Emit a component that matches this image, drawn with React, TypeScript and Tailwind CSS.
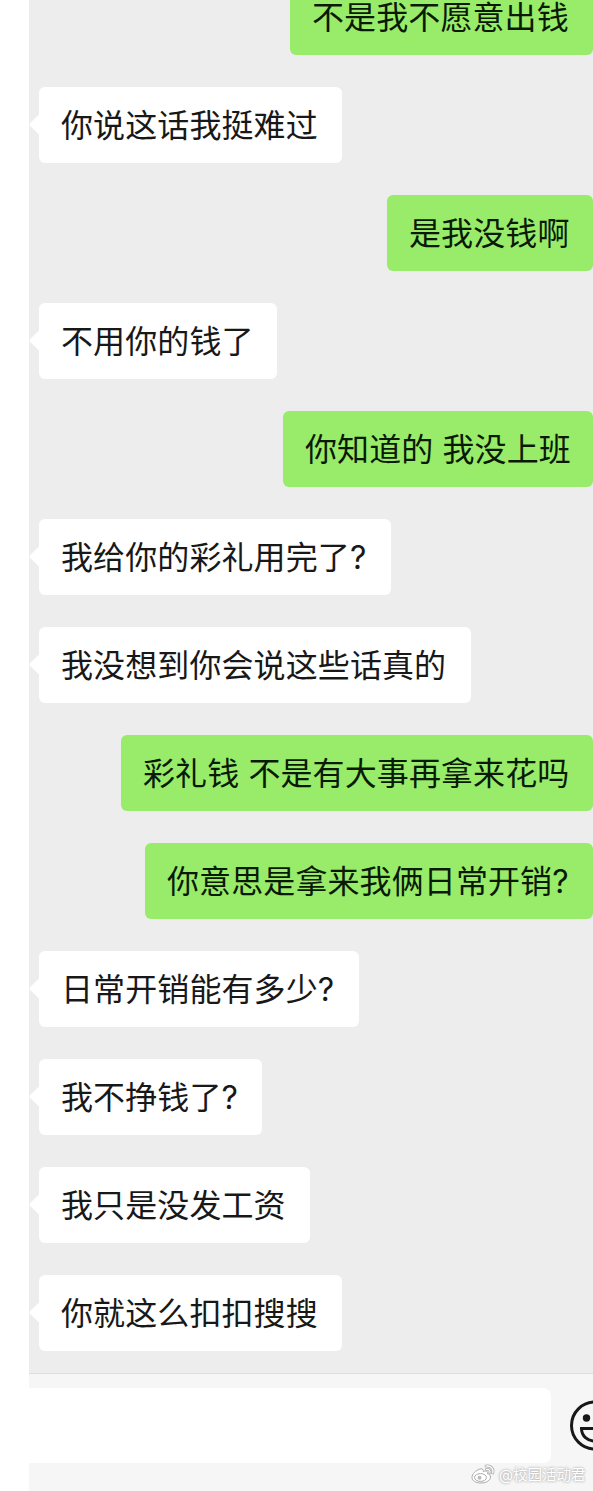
type Message = {
  text: string;
  mine?: boolean;
  width: string;
};

const messages: Message[] = [
  { text: "不是我不愿意出钱", mine: true, width: "w-[303px]" },
  { text: "你说这话我挺难过", width: "w-[303px]" },
  { text: "是我没钱啊", mine: true, width: "w-[206px]" },
  { text: "不用你的钱了", width: "w-[238px]" },
  { text: "你知道的 我没上班", mine: true, width: "w-[310px]" },
  { text: "我给你的彩礼用完了?", width: "w-[352px]" },
  { text: "我没想到你会说这些话真的", width: "w-[432px]" },
  { text: "彩礼钱 不是有大事再拿来花吗", mine: true, width: "w-[472px]" },
  { text: "你意思是拿来我俩日常开销?", mine: true, width: "w-[448px]" },
  { text: "日常开销能有多少?", width: "w-[320px]" },
  { text: "我不挣钱了?", width: "w-[223px]" },
  { text: "我只是没发工资", width: "w-[271px]" },
  { text: "你就这么扣扣搜搜", width: "w-[303px]" },
];

const Bubble = ({ text, mine, width }: Message) => {
  if (mine) {
    return (
      <div className="flex justify-end">
        <div
          className={`flex h-[76px] items-center rounded-md bg-[#98ec6a] pt-[2px] pl-[22px] text-[#0b1a05] ${width}`}
        >
          <span className="whitespace-nowrap">{text}</span>
        </div>
      </div>
    );
  }

  return (
    <div className="flex items-center">
      <svg width="10" height="24" viewBox="0 0 10 24" fill="#fff">
        <path d="M10 1.5 1.2 10Q0 11.5 1.2 13L10 21.5Z" />
      </svg>
      <div
        className={`flex h-[76px] items-center rounded-md bg-white pt-[2px] pl-[22px] ${width}`}
      >
        <span className="whitespace-nowrap">{text}</span>
      </div>
    </div>
  );
};

const Watermark = () => (
  <div className="absolute top-[90px] left-[442px] flex items-center text-white">
    <svg width="24" height="22" viewBox="0 0 24 22" fill="none">
      <path
        d="M15 2.200c4.500-1 8 2.500 6.800 6.800M15.500 5.400c2.300-.5 4 1.200 3.400 3.400"
        stroke="#aaa"
        strokeWidth="2.800"
        strokeLinecap="round"
      />
      <path
        d="M15 2.200c4.500-1 8 2.500 6.800 6.800M15.500 5.400c2.300-.5 4 1.200 3.400 3.400"
        stroke="#fff"
        strokeWidth="1.300"
        strokeLinecap="round"
      />
      <path
        d="M9 5C4.500 6.500 1 10 1 13.500c0 3.500 4.200 5.500 9 5.500 5.500 0 9.500-2.800 9.500-6 0-1.900-1.400-2.900-3-3.300.6-2-.7-3.400-4.200-2.200C12.500 5.500 11.500 4.300 9 5Z"
        fill="#fff"
        stroke="#aaa"
      />
      <ellipse cx="9.500" cy="13.500" rx="6" ry="3.900" stroke="#aaa" />
      <circle cx="8.500" cy="13.700" r="2" fill="#bbb" />
    </svg>
    <span className="ml-1 text-[14.500px] leading-[22px] tracking-normal whitespace-nowrap [text-shadow:0_0_2px_#aaa,0_0_3px_#bbb]">
      @校园活动君
    </span>
  </div>
);

const App = () => {
  return (
    <div className="h-[1491px] w-[593px] overflow-hidden bg-white pl-[29px] font-[Inter,'Noto_Sans_CJK_SC',sans-serif] text-[32px] leading-[48px] tracking-[0.1px] text-[#181818]">
      <main className="h-[1373px] overflow-hidden bg-[#ededed]">
        <div className="-mt-[21px] flex flex-col gap-8">
          {messages.map((message) => (
            <Bubble key={message.text} {...message} />
          ))}
        </div>
      </main>

      <footer className="relative h-[118px] overflow-hidden border-t border-[#dedede] bg-[#f6f6f6]">
        <div className="flex items-start pt-[14px]">
          <div className="h-[75px] w-[522px] shrink-0 rounded-r-lg bg-white" />
          <svg
            className="mt-[12px] ml-[18px] shrink-0"
            width="52"
            height="52"
            viewBox="0 0 52 52"
            fill="none"
            stroke="#181818"
            strokeWidth="3"
          >
            <circle cx="26" cy="25.500" r="23.500" />
            <circle cx="17.500" cy="18" r="3.700" fill="#181818" stroke="none" />
            <circle cx="34.500" cy="18" r="3.700" fill="#181818" stroke="none" />
            <path d="M12.500 28.500h27c0 7.500-6 12.500-13.500 12.500s-13.500-5-13.500-12.500Z" />
          </svg>
        </div>
        <Watermark />
      </footer>
    </div>
  );
};

export default App;
